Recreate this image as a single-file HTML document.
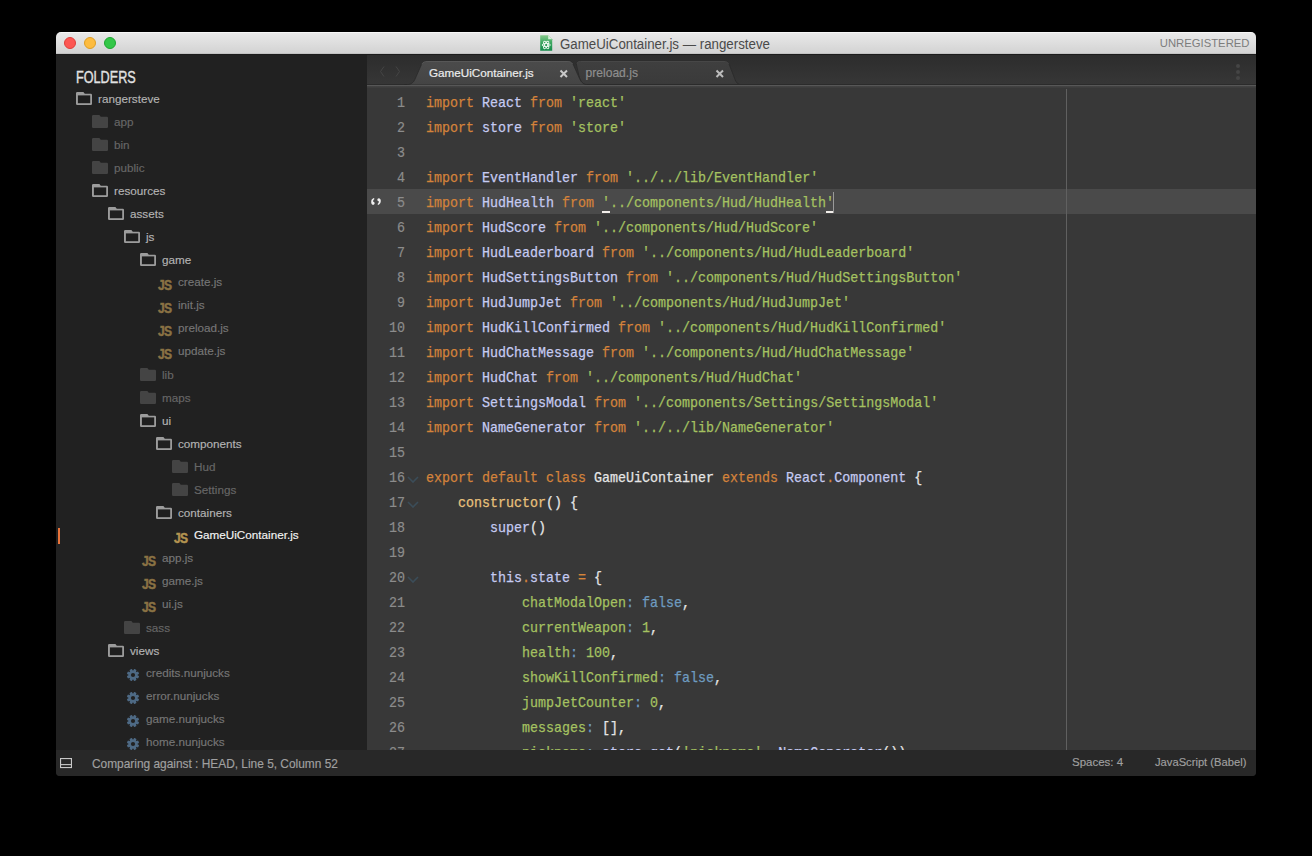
<!DOCTYPE html>
<html><head><meta charset="utf-8">
<style>
*{margin:0;padding:0;box-sizing:border-box}
html,body{width:1312px;height:856px;background:#000;overflow:hidden}
body{position:relative;font-family:"Liberation Sans",sans-serif}
#win{position:absolute;left:56px;top:32px;width:1200px;height:744px;border-radius:5px 5px 4px 4px;overflow:hidden;background:#222}
#title{position:absolute;left:0;top:0;width:1200px;height:22px;background:linear-gradient(#e9e9e9,#d3d3d3);border-top:1px solid #f7f7f7;border-bottom:1px solid #c2c2c2}
.tl{position:absolute;top:4px;width:12px;height:12px;border-radius:50%}
#ttext{position:absolute;left:503.5px;top:3.15px;line-height:16px;font-size:14px;color:#4a4a4a;white-space:nowrap;transform:scaleX(0.95);transform-origin:0 0}
#unreg{position:absolute;right:6.5px;top:2.9px;line-height:14px;font-size:11.3px;color:#7d7d7d;letter-spacing:0}
#side{position:absolute;left:0;top:22px;width:311px;height:696px;background:#212121;overflow:hidden}
.abs{position:absolute}
#folders{position:absolute;left:20px;top:13.5px;height:20px;line-height:20px;font-size:16px;color:#e2e2e2;-webkit-text-stroke:0.35px currentColor;transform:scaleX(0.79);transform-origin:0 0;white-space:nowrap}
.ic{position:absolute;line-height:0}
.st{position:absolute;font-size:11.7px;line-height:18px;white-space:nowrap;-webkit-text-stroke:0.15px currentColor}
.js{position:absolute;font-size:14px;font-weight:bold;line-height:12px;letter-spacing:-0.8px;transform:scaleX(0.86);transform-origin:0 0;-webkit-text-stroke:0.5px currentColor}
#tabs{position:absolute;left:311px;top:22px;width:889px;height:32px;background:linear-gradient(#2c2c2c,#373737)}
#edit{position:absolute;left:311px;top:54px;width:889px;height:664px;background:#383838;overflow:hidden}
#status{position:absolute;left:0;top:718px;width:1200px;height:26px;background:#282828}
.cl{position:absolute;left:59px;height:25px;line-height:25px;font-family:"Liberation Mono",monospace;font-size:15px;white-space:pre;transform:scaleX(0.88889);transform-origin:0 0;-webkit-text-stroke:0.25px currentColor}
.ln{position:absolute;left:0;width:38px;text-align:right;height:25px;line-height:25px;font-family:"Liberation Mono",monospace;font-size:15px;color:#8c8c8c;transform:scaleX(0.88889);transform-origin:100% 0;-webkit-text-stroke:0.2px currentColor}
.fold{position:absolute;left:40px}
.tabt{position:absolute;top:12px;font-size:11.7px;line-height:14px;white-space:nowrap;-webkit-text-stroke:0.2px currentColor}
.sb{position:absolute;top:6px;font-size:11.5px;color:#a0a0a0;white-space:nowrap;-webkit-text-stroke:0.15px currentColor}
</style></head><body>
<div id="win">
  <div id="title">
    <div class="tl" style="left:8px;background:#fc5753;border:0.5px solid #de3f3a"></div>
    <div class="tl" style="left:28px;background:#fdbc40;border:0.5px solid #de9e25"></div>
    <div class="tl" style="left:48px;background:#33c748;border:0.5px solid #1ea631"></div>
    <svg class="abs" style="left:484px;top:2px" width="13" height="16" viewBox="0 0 13 16"><defs><linearGradient id="gt" x1="0" y1="0" x2="0" y2="1"><stop offset="0" stop-color="#86c98a"/><stop offset="0.45" stop-color="#3fa862"/><stop offset="1" stop-color="#138a4a"/></linearGradient></defs><path d="M0.2 0.2H8.2L12.2 4.2V15.8H0.2Z" fill="url(#gt)"/><path d="M8.2 0.2V4.2H12.2Z" fill="#d8efd9"/><g fill="none" stroke="#f2fbf3" stroke-width="0.9"><ellipse cx="6.2" cy="10" rx="4.2" ry="1.6"/><ellipse cx="6.2" cy="10" rx="4.2" ry="1.6" transform="rotate(60 6.2 10)"/><ellipse cx="6.2" cy="10" rx="4.2" ry="1.6" transform="rotate(-60 6.2 10)"/></g></svg>
    <div id="ttext">GameUiContainer.js — rangersteve</div>
    <div id="unreg">UNREGISTERED</div>
  </div>
  <div style="position:absolute;left:0;top:22px;width:1200px;height:1px;background:#1c1c1c;z-index:5"></div>
  <div id="side">
    <div id="folders">FOLDERS</div>
  </div>
  <div id="sideitems" style="position:absolute;left:-56px;top:-32px;width:1312px;height:856px">
<div class="ic" style="left:76px;top:92.00px"><svg width="16" height="13" viewBox="0 0 16 13"><path d="M0 1.2Q0 0 1.2 0H7.4L8.8 1.8H14.8Q16 1.8 16 3V11.8Q16 13 14.8 13H1.2Q0 13 0 11.8Z" fill="#9c9c9c"/><rect x="1.9" y="3.4" width="12.3" height="7.8" fill="#1f1f1f"/></svg></div>
<div class="st" style="left:98px;top:89.95px;color:#b4b4b4">rangersteve</div>
<div class="ic" style="left:92px;top:115.00px"><svg width="16" height="13" viewBox="0 0 16 13"><path d="M0 1.2Q0 0 1.2 0H7.4L8.8 1.8H14.8Q16 1.8 16 3V11.8Q16 13 14.8 13H1.2Q0 13 0 11.8Z" fill="#444"/></svg></div>
<div class="st" style="left:114px;top:112.95px;color:#676767">app</div>
<div class="ic" style="left:92px;top:138.00px"><svg width="16" height="13" viewBox="0 0 16 13"><path d="M0 1.2Q0 0 1.2 0H7.4L8.8 1.8H14.8Q16 1.8 16 3V11.8Q16 13 14.8 13H1.2Q0 13 0 11.8Z" fill="#444"/></svg></div>
<div class="st" style="left:114px;top:135.95px;color:#676767">bin</div>
<div class="ic" style="left:92px;top:161.00px"><svg width="16" height="13" viewBox="0 0 16 13"><path d="M0 1.2Q0 0 1.2 0H7.4L8.8 1.8H14.8Q16 1.8 16 3V11.8Q16 13 14.8 13H1.2Q0 13 0 11.8Z" fill="#444"/></svg></div>
<div class="st" style="left:114px;top:158.95px;color:#676767">public</div>
<div class="ic" style="left:92px;top:184.00px"><svg width="16" height="13" viewBox="0 0 16 13"><path d="M0 1.2Q0 0 1.2 0H7.4L8.8 1.8H14.8Q16 1.8 16 3V11.8Q16 13 14.8 13H1.2Q0 13 0 11.8Z" fill="#9c9c9c"/><rect x="1.9" y="3.4" width="12.3" height="7.8" fill="#1f1f1f"/></svg></div>
<div class="st" style="left:114px;top:181.95px;color:#b4b4b4">resources</div>
<div class="ic" style="left:108px;top:207.00px"><svg width="16" height="13" viewBox="0 0 16 13"><path d="M0 1.2Q0 0 1.2 0H7.4L8.8 1.8H14.8Q16 1.8 16 3V11.8Q16 13 14.8 13H1.2Q0 13 0 11.8Z" fill="#9c9c9c"/><rect x="1.9" y="3.4" width="12.3" height="7.8" fill="#1f1f1f"/></svg></div>
<div class="st" style="left:130px;top:204.95px;color:#b4b4b4">assets</div>
<div class="ic" style="left:124px;top:230.00px"><svg width="16" height="13" viewBox="0 0 16 13"><path d="M0 1.2Q0 0 1.2 0H7.4L8.8 1.8H14.8Q16 1.8 16 3V11.8Q16 13 14.8 13H1.2Q0 13 0 11.8Z" fill="#9c9c9c"/><rect x="1.9" y="3.4" width="12.3" height="7.8" fill="#1f1f1f"/></svg></div>
<div class="st" style="left:146px;top:227.95px;color:#b4b4b4">js</div>
<div class="ic" style="left:140px;top:253.00px"><svg width="16" height="13" viewBox="0 0 16 13"><path d="M0 1.2Q0 0 1.2 0H7.4L8.8 1.8H14.8Q16 1.8 16 3V11.8Q16 13 14.8 13H1.2Q0 13 0 11.8Z" fill="#9c9c9c"/><rect x="1.9" y="3.4" width="12.3" height="7.8" fill="#1f1f1f"/></svg></div>
<div class="st" style="left:162px;top:250.95px;color:#b4b4b4">game</div>
<div class="js" style="left:158px;top:279.45px;color:#8a7244">JS</div>
<div class="st" style="left:178px;top:272.95px;color:#767676">create.js</div>
<div class="js" style="left:158px;top:302.45px;color:#8a7244">JS</div>
<div class="st" style="left:178px;top:295.95px;color:#767676">init.js</div>
<div class="js" style="left:158px;top:325.45px;color:#8a7244">JS</div>
<div class="st" style="left:178px;top:318.95px;color:#767676">preload.js</div>
<div class="js" style="left:158px;top:348.45px;color:#8a7244">JS</div>
<div class="st" style="left:178px;top:341.95px;color:#767676">update.js</div>
<div class="ic" style="left:140px;top:368.00px"><svg width="16" height="13" viewBox="0 0 16 13"><path d="M0 1.2Q0 0 1.2 0H7.4L8.8 1.8H14.8Q16 1.8 16 3V11.8Q16 13 14.8 13H1.2Q0 13 0 11.8Z" fill="#444"/></svg></div>
<div class="st" style="left:162px;top:365.95px;color:#676767">lib</div>
<div class="ic" style="left:140px;top:391.00px"><svg width="16" height="13" viewBox="0 0 16 13"><path d="M0 1.2Q0 0 1.2 0H7.4L8.8 1.8H14.8Q16 1.8 16 3V11.8Q16 13 14.8 13H1.2Q0 13 0 11.8Z" fill="#444"/></svg></div>
<div class="st" style="left:162px;top:388.95px;color:#676767">maps</div>
<div class="ic" style="left:140px;top:414.00px"><svg width="16" height="13" viewBox="0 0 16 13"><path d="M0 1.2Q0 0 1.2 0H7.4L8.8 1.8H14.8Q16 1.8 16 3V11.8Q16 13 14.8 13H1.2Q0 13 0 11.8Z" fill="#9c9c9c"/><rect x="1.9" y="3.4" width="12.3" height="7.8" fill="#1f1f1f"/></svg></div>
<div class="st" style="left:162px;top:411.95px;color:#b4b4b4">ui</div>
<div class="ic" style="left:156px;top:437.00px"><svg width="16" height="13" viewBox="0 0 16 13"><path d="M0 1.2Q0 0 1.2 0H7.4L8.8 1.8H14.8Q16 1.8 16 3V11.8Q16 13 14.8 13H1.2Q0 13 0 11.8Z" fill="#9c9c9c"/><rect x="1.9" y="3.4" width="12.3" height="7.8" fill="#1f1f1f"/></svg></div>
<div class="st" style="left:178px;top:434.95px;color:#b4b4b4">components</div>
<div class="ic" style="left:172px;top:460.00px"><svg width="16" height="13" viewBox="0 0 16 13"><path d="M0 1.2Q0 0 1.2 0H7.4L8.8 1.8H14.8Q16 1.8 16 3V11.8Q16 13 14.8 13H1.2Q0 13 0 11.8Z" fill="#444"/></svg></div>
<div class="st" style="left:194px;top:457.95px;color:#676767">Hud</div>
<div class="ic" style="left:172px;top:483.00px"><svg width="16" height="13" viewBox="0 0 16 13"><path d="M0 1.2Q0 0 1.2 0H7.4L8.8 1.8H14.8Q16 1.8 16 3V11.8Q16 13 14.8 13H1.2Q0 13 0 11.8Z" fill="#444"/></svg></div>
<div class="st" style="left:194px;top:480.95px;color:#676767">Settings</div>
<div class="ic" style="left:156px;top:506.00px"><svg width="16" height="13" viewBox="0 0 16 13"><path d="M0 1.2Q0 0 1.2 0H7.4L8.8 1.8H14.8Q16 1.8 16 3V11.8Q16 13 14.8 13H1.2Q0 13 0 11.8Z" fill="#9c9c9c"/><rect x="1.9" y="3.4" width="12.3" height="7.8" fill="#1f1f1f"/></svg></div>
<div class="st" style="left:178px;top:503.95px;color:#b4b4b4">containers</div>
<div class="js" style="left:174px;top:532.45px;color:#b39350">JS</div>
<div class="st" style="left:194px;top:525.95px;color:#f4f4f4">GameUiContainer.js</div>
<div style="position:absolute;left:58px;top:528.00px;width:2px;height:16px;background:#e8733a"></div>
<div class="js" style="left:142px;top:555.45px;color:#8a7244">JS</div>
<div class="st" style="left:162px;top:548.95px;color:#767676">app.js</div>
<div class="js" style="left:142px;top:578.45px;color:#8a7244">JS</div>
<div class="st" style="left:162px;top:571.95px;color:#767676">game.js</div>
<div class="js" style="left:142px;top:601.45px;color:#8a7244">JS</div>
<div class="st" style="left:162px;top:594.95px;color:#767676">ui.js</div>
<div class="ic" style="left:124px;top:621.00px"><svg width="16" height="13" viewBox="0 0 16 13"><path d="M0 1.2Q0 0 1.2 0H7.4L8.8 1.8H14.8Q16 1.8 16 3V11.8Q16 13 14.8 13H1.2Q0 13 0 11.8Z" fill="#444"/></svg></div>
<div class="st" style="left:146px;top:618.95px;color:#676767">sass</div>
<div class="ic" style="left:108px;top:644.00px"><svg width="16" height="13" viewBox="0 0 16 13"><path d="M0 1.2Q0 0 1.2 0H7.4L8.8 1.8H14.8Q16 1.8 16 3V11.8Q16 13 14.8 13H1.2Q0 13 0 11.8Z" fill="#9c9c9c"/><rect x="1.9" y="3.4" width="12.3" height="7.8" fill="#1f1f1f"/></svg></div>
<div class="st" style="left:130px;top:641.95px;color:#b4b4b4">views</div>
<div class="ic" style="left:126px;top:668.20px"><svg width="14" height="14" viewBox="0 0 14 14"><g fill="#4e6a85"><circle cx="7" cy="7" r="4.6"/><rect x="5.6" y="0.9" width="2.8" height="3.4" rx="0.7" transform="rotate(22.5 7 7)"/><rect x="5.6" y="0.9" width="2.8" height="3.4" rx="0.7" transform="rotate(67.5 7 7)"/><rect x="5.6" y="0.9" width="2.8" height="3.4" rx="0.7" transform="rotate(112.5 7 7)"/><rect x="5.6" y="0.9" width="2.8" height="3.4" rx="0.7" transform="rotate(157.5 7 7)"/><rect x="5.6" y="0.9" width="2.8" height="3.4" rx="0.7" transform="rotate(202.5 7 7)"/><rect x="5.6" y="0.9" width="2.8" height="3.4" rx="0.7" transform="rotate(247.5 7 7)"/><rect x="5.6" y="0.9" width="2.8" height="3.4" rx="0.7" transform="rotate(292.5 7 7)"/><rect x="5.6" y="0.9" width="2.8" height="3.4" rx="0.7" transform="rotate(337.5 7 7)"/></g><circle cx="7" cy="7" r="2.1" fill="#212121"/></svg></div>
<div class="st" style="left:146px;top:663.95px;color:#767676">credits.nunjucks</div>
<div class="ic" style="left:126px;top:691.20px"><svg width="14" height="14" viewBox="0 0 14 14"><g fill="#4e6a85"><circle cx="7" cy="7" r="4.6"/><rect x="5.6" y="0.9" width="2.8" height="3.4" rx="0.7" transform="rotate(22.5 7 7)"/><rect x="5.6" y="0.9" width="2.8" height="3.4" rx="0.7" transform="rotate(67.5 7 7)"/><rect x="5.6" y="0.9" width="2.8" height="3.4" rx="0.7" transform="rotate(112.5 7 7)"/><rect x="5.6" y="0.9" width="2.8" height="3.4" rx="0.7" transform="rotate(157.5 7 7)"/><rect x="5.6" y="0.9" width="2.8" height="3.4" rx="0.7" transform="rotate(202.5 7 7)"/><rect x="5.6" y="0.9" width="2.8" height="3.4" rx="0.7" transform="rotate(247.5 7 7)"/><rect x="5.6" y="0.9" width="2.8" height="3.4" rx="0.7" transform="rotate(292.5 7 7)"/><rect x="5.6" y="0.9" width="2.8" height="3.4" rx="0.7" transform="rotate(337.5 7 7)"/></g><circle cx="7" cy="7" r="2.1" fill="#212121"/></svg></div>
<div class="st" style="left:146px;top:686.95px;color:#767676">error.nunjucks</div>
<div class="ic" style="left:126px;top:714.20px"><svg width="14" height="14" viewBox="0 0 14 14"><g fill="#4e6a85"><circle cx="7" cy="7" r="4.6"/><rect x="5.6" y="0.9" width="2.8" height="3.4" rx="0.7" transform="rotate(22.5 7 7)"/><rect x="5.6" y="0.9" width="2.8" height="3.4" rx="0.7" transform="rotate(67.5 7 7)"/><rect x="5.6" y="0.9" width="2.8" height="3.4" rx="0.7" transform="rotate(112.5 7 7)"/><rect x="5.6" y="0.9" width="2.8" height="3.4" rx="0.7" transform="rotate(157.5 7 7)"/><rect x="5.6" y="0.9" width="2.8" height="3.4" rx="0.7" transform="rotate(202.5 7 7)"/><rect x="5.6" y="0.9" width="2.8" height="3.4" rx="0.7" transform="rotate(247.5 7 7)"/><rect x="5.6" y="0.9" width="2.8" height="3.4" rx="0.7" transform="rotate(292.5 7 7)"/><rect x="5.6" y="0.9" width="2.8" height="3.4" rx="0.7" transform="rotate(337.5 7 7)"/></g><circle cx="7" cy="7" r="2.1" fill="#212121"/></svg></div>
<div class="st" style="left:146px;top:709.95px;color:#767676">game.nunjucks</div>
<div class="ic" style="left:126px;top:737.20px"><svg width="14" height="14" viewBox="0 0 14 14"><g fill="#4e6a85"><circle cx="7" cy="7" r="4.6"/><rect x="5.6" y="0.9" width="2.8" height="3.4" rx="0.7" transform="rotate(22.5 7 7)"/><rect x="5.6" y="0.9" width="2.8" height="3.4" rx="0.7" transform="rotate(67.5 7 7)"/><rect x="5.6" y="0.9" width="2.8" height="3.4" rx="0.7" transform="rotate(112.5 7 7)"/><rect x="5.6" y="0.9" width="2.8" height="3.4" rx="0.7" transform="rotate(157.5 7 7)"/><rect x="5.6" y="0.9" width="2.8" height="3.4" rx="0.7" transform="rotate(202.5 7 7)"/><rect x="5.6" y="0.9" width="2.8" height="3.4" rx="0.7" transform="rotate(247.5 7 7)"/><rect x="5.6" y="0.9" width="2.8" height="3.4" rx="0.7" transform="rotate(292.5 7 7)"/><rect x="5.6" y="0.9" width="2.8" height="3.4" rx="0.7" transform="rotate(337.5 7 7)"/></g><circle cx="7" cy="7" r="2.1" fill="#212121"/></svg></div>
<div class="st" style="left:146px;top:732.95px;color:#767676">home.nunjucks</div>
  </div>
  <div id="tabs">
    <svg class="abs" style="left:0;top:0" width="889" height="32" viewBox="0 0 889 32">
      <defs>
        <linearGradient id="ga" x1="0" y1="0" x2="0" y2="1"><stop offset="0" stop-color="#4b4b4b"/><stop offset="1" stop-color="#444"/></linearGradient>
        <linearGradient id="gi" x1="0" y1="0" x2="0" y2="1"><stop offset="0" stop-color="#3f3f3f"/><stop offset="1" stop-color="#3a3a3a"/></linearGradient>
      </defs>
      <path d="M218 31 C214.5 29 213 26 212 22 L209.5 11 C209 8.5 210.5 7 213.5 7 H357 C360 7 361 8 362 10 L367.5 24 C369 28.5 370.5 30.5 375 31 Z" fill="url(#gi)" stroke="#2c2c2c" stroke-width="1"/>
      <path d="M210 9.5 C210.5 7.8 211.5 7.5 213.5 7.5 H357 C359.5 7.5 360.5 8 361.5 10" fill="none" stroke="#474747" stroke-width="1"/>
      <rect x="0" y="30" width="889" height="1" fill="#2b2b2b"/>
      <path d="M37 31 C44 31 46.5 29 48.5 24 L54.5 10.5 C56 7.8 57.5 7 61 7 H200 C203.5 7 204.5 7.5 206 10 L212.5 24.5 C214.5 29 217 31 223 31 Z" fill="url(#ga)" stroke="#2a2a2a" stroke-width="0.8"/>
      <path d="M54.8 10.2 C56.2 8 57.5 7.5 61 7.5 H200 C203 7.5 204.2 8 205.6 10" fill="none" stroke="#575757" stroke-width="1"/>
      <path d="M17 12.5 L13.5 17.5 L17 22.5" fill="none" stroke="#454545" stroke-width="1"/>
      <path d="M29 12.5 L32.5 17.5 L29 22.5" fill="none" stroke="#454545" stroke-width="1"/>
      <rect x="0" y="31" width="889" height="1" fill="#575757"/>
      <circle cx="871" cy="12" r="2" fill="#454545"/><circle cx="871" cy="18" r="2" fill="#454545"/><circle cx="871" cy="24" r="2" fill="#454545"/>
      <path d="M193.5 16.5 L200 23 M200 16.5 L193.5 23" stroke="#c9c9c9" stroke-width="2"/>
      <path d="M349.5 16.5 L356 23 M356 16.5 L349.5 23" stroke="#bdbdbd" stroke-width="2"/>
    </svg>
    <div class="tabt" style="left:62px;color:#ececec">GameUiContainer.js</div>
    <div class="tabt" style="left:218.5px;font-size:12.1px;color:#8e8e8e">preload.js</div>
  </div>
  <div id="edit">
    <div style="position:absolute;left:0;top:0;width:889px;height:2px;background:linear-gradient(#444,#3b3b3b)"></div>
    <div style="position:absolute;left:0;top:103px;width:889px;height:25px;background:#4a4a4a"></div>
    <div style="position:absolute;left:699px;top:3px;width:1px;height:661px;background:#606060"></div>
  </div>
  <div id="code" style="position:absolute;left:-56px;top:-32px;width:1312px;height:856px">
    <div style="position:absolute;left:367px;top:0;width:0;height:0">
<div class="ln" style="top:91.0px">1</div>
<div class="ln" style="top:116.0px">2</div>
<div class="ln" style="top:141.0px">3</div>
<div class="ln" style="top:166.0px">4</div>
<div class="ln" style="top:191.0px">5</div>
<div class="ln" style="top:216.0px">6</div>
<div class="ln" style="top:241.0px">7</div>
<div class="ln" style="top:266.0px">8</div>
<div class="ln" style="top:291.0px">9</div>
<div class="ln" style="top:316.0px">10</div>
<div class="ln" style="top:341.0px">11</div>
<div class="ln" style="top:366.0px">12</div>
<div class="ln" style="top:391.0px">13</div>
<div class="ln" style="top:416.0px">14</div>
<div class="ln" style="top:441.0px">15</div>
<div class="ln" style="top:466.0px">16</div>
<svg class="fold" style="top:475.8px" width="12" height="7" viewBox="0 0 12 7"><path d="M1 1L6 6L11 1" fill="none" stroke="#3b4d59" stroke-width="1.6"/></svg>
<div class="ln" style="top:491.0px">17</div>
<svg class="fold" style="top:500.8px" width="12" height="7" viewBox="0 0 12 7"><path d="M1 1L6 6L11 1" fill="none" stroke="#3b4d59" stroke-width="1.6"/></svg>
<div class="ln" style="top:516.0px">18</div>
<div class="ln" style="top:541.0px">19</div>
<div class="ln" style="top:566.0px">20</div>
<svg class="fold" style="top:575.8px" width="12" height="7" viewBox="0 0 12 7"><path d="M1 1L6 6L11 1" fill="none" stroke="#3b4d59" stroke-width="1.6"/></svg>
<div class="ln" style="top:591.0px">21</div>
<div class="ln" style="top:616.0px">22</div>
<div class="ln" style="top:641.0px">23</div>
<div class="ln" style="top:666.0px">24</div>
<div class="ln" style="top:691.0px">25</div>
<div class="ln" style="top:716.0px">26</div>
<div class="ln" style="top:741.0px">27</div>
    </div>
    <div style="position:absolute;left:367px;top:0;width:0;height:0">
<div class="cl" style="top:91.0px"><span style="color:#d4833b">import</span><span style="color:#e6e6e6"> </span><span style="color:#c6cbf2">React</span><span style="color:#e6e6e6"> </span><span style="color:#d4833b">from</span><span style="color:#e6e6e6"> </span><span style="color:#a5c261">&#x27;react&#x27;</span></div>
<div class="cl" style="top:116.0px"><span style="color:#d4833b">import</span><span style="color:#e6e6e6"> </span><span style="color:#c6cbf2">store</span><span style="color:#e6e6e6"> </span><span style="color:#d4833b">from</span><span style="color:#e6e6e6"> </span><span style="color:#a5c261">&#x27;store&#x27;</span></div>
<div class="cl" style="top:141.0px"></div>
<div class="cl" style="top:166.0px"><span style="color:#d4833b">import</span><span style="color:#e6e6e6"> </span><span style="color:#c6cbf2">EventHandler</span><span style="color:#e6e6e6"> </span><span style="color:#d4833b">from</span><span style="color:#e6e6e6"> </span><span style="color:#a5c261">&#x27;../../lib/EventHandler&#x27;</span></div>
<div class="cl" style="top:191.0px"><span style="color:#d4833b">import</span><span style="color:#e6e6e6"> </span><span style="color:#c6cbf2">HudHealth</span><span style="color:#e6e6e6"> </span><span style="color:#d4833b">from</span><span style="color:#e6e6e6"> </span><span style="color:#a5c261">&#x27;../components/Hud/HudHealth&#x27;</span></div>
<div class="cl" style="top:216.0px"><span style="color:#d4833b">import</span><span style="color:#e6e6e6"> </span><span style="color:#c6cbf2">HudScore</span><span style="color:#e6e6e6"> </span><span style="color:#d4833b">from</span><span style="color:#e6e6e6"> </span><span style="color:#a5c261">&#x27;../components/Hud/HudScore&#x27;</span></div>
<div class="cl" style="top:241.0px"><span style="color:#d4833b">import</span><span style="color:#e6e6e6"> </span><span style="color:#c6cbf2">HudLeaderboard</span><span style="color:#e6e6e6"> </span><span style="color:#d4833b">from</span><span style="color:#e6e6e6"> </span><span style="color:#a5c261">&#x27;../components/Hud/HudLeaderboard&#x27;</span></div>
<div class="cl" style="top:266.0px"><span style="color:#d4833b">import</span><span style="color:#e6e6e6"> </span><span style="color:#c6cbf2">HudSettingsButton</span><span style="color:#e6e6e6"> </span><span style="color:#d4833b">from</span><span style="color:#e6e6e6"> </span><span style="color:#a5c261">&#x27;../components/Hud/HudSettingsButton&#x27;</span></div>
<div class="cl" style="top:291.0px"><span style="color:#d4833b">import</span><span style="color:#e6e6e6"> </span><span style="color:#c6cbf2">HudJumpJet</span><span style="color:#e6e6e6"> </span><span style="color:#d4833b">from</span><span style="color:#e6e6e6"> </span><span style="color:#a5c261">&#x27;../components/Hud/HudJumpJet&#x27;</span></div>
<div class="cl" style="top:316.0px"><span style="color:#d4833b">import</span><span style="color:#e6e6e6"> </span><span style="color:#c6cbf2">HudKillConfirmed</span><span style="color:#e6e6e6"> </span><span style="color:#d4833b">from</span><span style="color:#e6e6e6"> </span><span style="color:#a5c261">&#x27;../components/Hud/HudKillConfirmed&#x27;</span></div>
<div class="cl" style="top:341.0px"><span style="color:#d4833b">import</span><span style="color:#e6e6e6"> </span><span style="color:#c6cbf2">HudChatMessage</span><span style="color:#e6e6e6"> </span><span style="color:#d4833b">from</span><span style="color:#e6e6e6"> </span><span style="color:#a5c261">&#x27;../components/Hud/HudChatMessage&#x27;</span></div>
<div class="cl" style="top:366.0px"><span style="color:#d4833b">import</span><span style="color:#e6e6e6"> </span><span style="color:#c6cbf2">HudChat</span><span style="color:#e6e6e6"> </span><span style="color:#d4833b">from</span><span style="color:#e6e6e6"> </span><span style="color:#a5c261">&#x27;../components/Hud/HudChat&#x27;</span></div>
<div class="cl" style="top:391.0px"><span style="color:#d4833b">import</span><span style="color:#e6e6e6"> </span><span style="color:#c6cbf2">SettingsModal</span><span style="color:#e6e6e6"> </span><span style="color:#d4833b">from</span><span style="color:#e6e6e6"> </span><span style="color:#a5c261">&#x27;../components/Settings/SettingsModal&#x27;</span></div>
<div class="cl" style="top:416.0px"><span style="color:#d4833b">import</span><span style="color:#e6e6e6"> </span><span style="color:#c6cbf2">NameGenerator</span><span style="color:#e6e6e6"> </span><span style="color:#d4833b">from</span><span style="color:#e6e6e6"> </span><span style="color:#a5c261">&#x27;../../lib/NameGenerator&#x27;</span></div>
<div class="cl" style="top:441.0px"></div>
<div class="cl" style="top:466.0px"><span style="color:#d4833b">export default class</span><span style="color:#e6e6e6"> </span><span style="color:#e6e6e6">GameUiContainer</span><span style="color:#e6e6e6"> </span><span style="color:#d4833b">extends</span><span style="color:#e6e6e6"> </span><span style="color:#c6cbf2">React</span><span style="color:#d4833b">.</span><span style="color:#c6cbf2">Component</span><span style="color:#e6e6e6"> {</span></div>
<div class="cl" style="top:491.0px"><span style="color:#e6e6e6">    </span><span style="color:#e8c17c">constructor</span><span style="color:#e6e6e6">() {</span></div>
<div class="cl" style="top:516.0px"><span style="color:#e6e6e6">        </span><span style="color:#c6cbf2">super</span><span style="color:#e6e6e6">()</span></div>
<div class="cl" style="top:541.0px"></div>
<div class="cl" style="top:566.0px"><span style="color:#e6e6e6">        </span><span style="color:#c6cbf2">this</span><span style="color:#d4833b">.</span><span style="color:#c6cbf2">state</span><span style="color:#e6e6e6"> </span><span style="color:#d4833b">=</span><span style="color:#e6e6e6"> {</span></div>
<div class="cl" style="top:591.0px"><span style="color:#e6e6e6">            </span><span style="color:#a5c261">chatModalOpen</span><span style="color:#6f9cc0">:</span><span style="color:#e6e6e6"> </span><span style="color:#6f9cc0">false</span><span style="color:#e6e6e6">,</span></div>
<div class="cl" style="top:616.0px"><span style="color:#e6e6e6">            </span><span style="color:#a5c261">currentWeapon</span><span style="color:#6f9cc0">:</span><span style="color:#e6e6e6"> </span><span style="color:#a5c261">1</span><span style="color:#e6e6e6">,</span></div>
<div class="cl" style="top:641.0px"><span style="color:#e6e6e6">            </span><span style="color:#a5c261">health</span><span style="color:#6f9cc0">:</span><span style="color:#e6e6e6"> </span><span style="color:#a5c261">100</span><span style="color:#e6e6e6">,</span></div>
<div class="cl" style="top:666.0px"><span style="color:#e6e6e6">            </span><span style="color:#a5c261">showKillConfirmed</span><span style="color:#6f9cc0">:</span><span style="color:#e6e6e6"> </span><span style="color:#6f9cc0">false</span><span style="color:#e6e6e6">,</span></div>
<div class="cl" style="top:691.0px"><span style="color:#e6e6e6">            </span><span style="color:#a5c261">jumpJetCounter</span><span style="color:#6f9cc0">:</span><span style="color:#e6e6e6"> </span><span style="color:#a5c261">0</span><span style="color:#e6e6e6">,</span></div>
<div class="cl" style="top:716.0px"><span style="color:#e6e6e6">            </span><span style="color:#a5c261">messages</span><span style="color:#6f9cc0">:</span><span style="color:#e6e6e6"> </span><span style="color:#e6e6e6">[],</span></div>
<div class="cl" style="top:741.0px"><span style="color:#e6e6e6">            </span><span style="color:#a5c261">nickname</span><span style="color:#6f9cc0">:</span><span style="color:#e6e6e6"> </span><span style="color:#c6cbf2">store</span><span style="color:#d4833b">.</span><span style="color:#c6cbf2">get</span><span style="color:#e6e6e6">(</span><span style="color:#a5c261">&#x27;nickname&#x27;</span><span style="color:#e6e6e6">, </span><span style="color:#c6cbf2">NameGenerator</span><span style="color:#e6e6e6">())</span><span style="color:#e6e6e6">,</span></div>
    </div>
  </div>
  <div id="marks" style="position:absolute;left:-56px;top:-32px;width:1312px;height:856px;pointer-events:none">
    <svg class="abs" style="left:369.5px;top:196.5px" width="12" height="9" viewBox="0 0 13 10"><path d="M4.2 1.2 C2 2 1 3.5 1.2 6 C1.3 7.6 2.2 8.6 3.3 8.6 C4.4 8.6 5 7.8 5 6.9 C5 5.8 4.2 5.1 3.2 5.2 C3.3 3.8 3.9 2.8 4.8 2.2 Z" fill="#f0f0f0"/><path d="M8.8 8.8 C11 8 12 6.5 11.8 4 C11.7 2.4 10.8 1.4 9.7 1.4 C8.6 1.4 8 2.2 8 3.1 C8 4.2 8.8 4.9 9.8 4.8 C9.7 6.2 9.1 7.2 8.2 7.8 Z" fill="#f0f0f0"/></svg>
    <div style="position:absolute;left:602px;top:211px;width:8px;height:2px;background:#f2eeea"></div>
    <div style="position:absolute;left:826px;top:211px;width:8px;height:2px;background:#f2eeea"></div>
    <div style="position:absolute;left:833px;top:192px;width:1px;height:21px;background:#9a9a9a"></div>
  </div>
  <div id="status">
    <svg class="abs" style="left:4px;top:8px" width="13" height="11" viewBox="0 0 13 11"><rect x="0.55" y="0.55" width="10.9" height="9" fill="none" stroke="#c8c8c8" stroke-width="1.1"/><line x1="0.5" y1="6.6" x2="11.5" y2="6.6" stroke="#c8c8c8" stroke-width="1.1"/></svg>
    <div class="sb" style="left:36px;top:7px;font-size:11.9px">Comparing against : HEAD, Line 5, Column 52</div>
    <div class="sb" style="left:1016px">Spaces: 4</div>
    <div class="sb" style="left:1099px;font-size:11.2px">JavaScript (Babel)</div>
  </div>
</div>
</body></html>
